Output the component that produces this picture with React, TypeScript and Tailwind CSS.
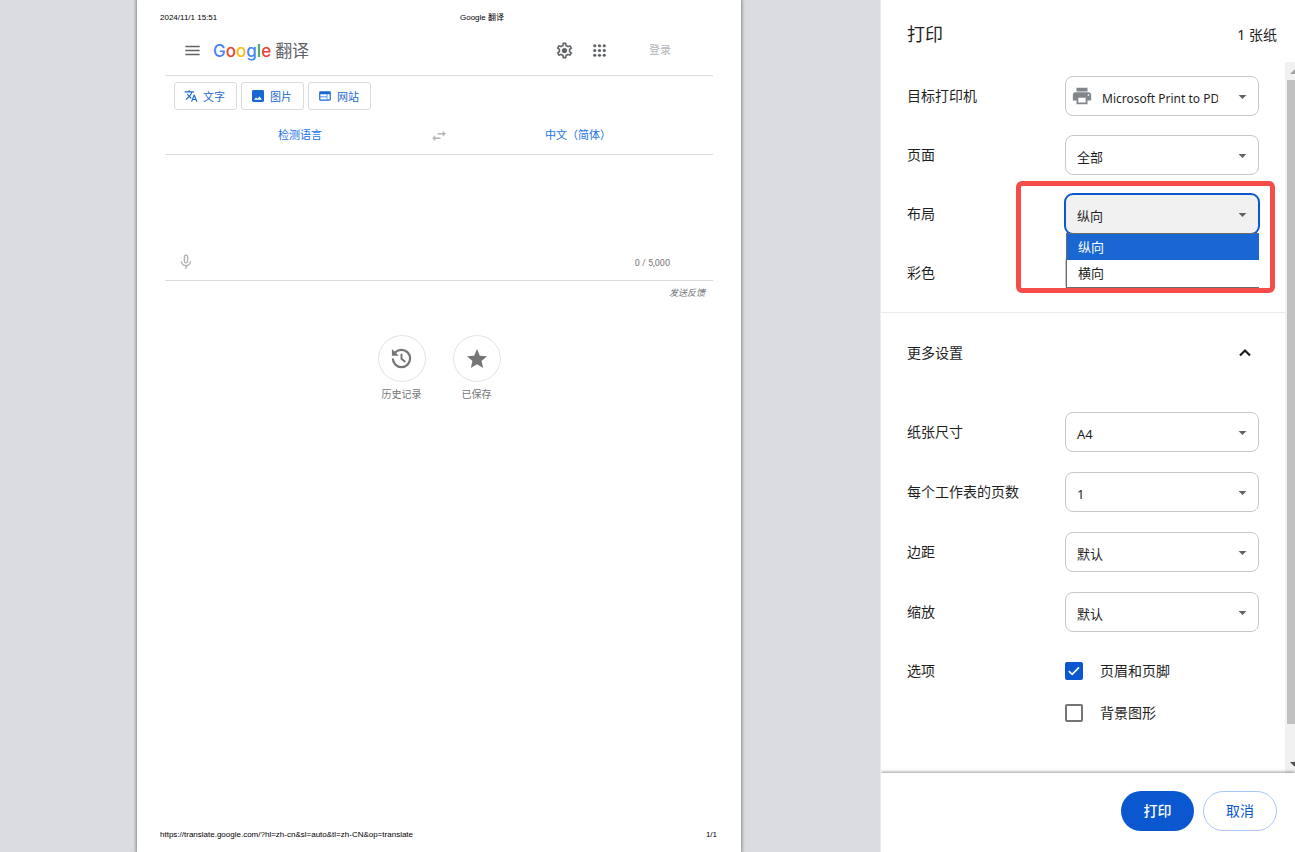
import { useState } from "react";
import type { ReactNode } from "react";
import { ChevronUp } from "lucide-react";
import {
  MdArrowDropDown,
  MdMenu,
  MdMicNone,
  MdOutlineSettings,
  MdPrint,
  MdStar,
  MdSwapHoriz,
  MdTranslate,
  MdWeb,
} from "react-icons/md";

function GearIcon() {
  return (
    <svg viewBox="0 0 24 24" className="size-[19px]" fill="currentColor">
      <MdOutlineSettings size={24} />
      <circle cx="12" cy="12" r="4.4" fill="#fff" />
      <circle cx="12" cy="12" r="3.3" />
    </svg>
  );
}

function AppsIcon() {
  const steps = [6, 12, 18];
  return (
    <svg viewBox="0 0 24 24" className="size-[19px]" fill="currentColor">
      {steps.map((y) => steps.map((x) => <circle key={`${x}-${y}`} cx={x} cy={y} r="2" />))}
    </svg>
  );
}

function ImageIcon() {
  return (
    <svg viewBox="0 0 14 14" className="size-3.5">
      <rect x="1" y="1" width="12" height="12" rx="1.4" fill="currentColor" />
      <path d="M3 10.8 5 8.4l1.4 1.4L8.6 7.4l2.4 3.4z" fill="#fff" />
    </svg>
  );
}

function HistoryIcon() {
  return (
    <svg viewBox="0 0 24 24" className="size-[23px]" fill="none" stroke="currentColor" strokeWidth="2.3">
      <path d="M3 12a9 9 0 1 0 9-9 9.75 9.75 0 0 0-6.74 2.74L4 7" />
      <path d="M12 7v5.3l4 3.4" strokeWidth="2" />
      <path d="M2 2v7.2h7.2l-2.4-2.3L4.4 4.4z" fill="currentColor" stroke="none" />
    </svg>
  );
}

function ModeButton({ icon, label }: { icon: ReactNode; label: string }) {
  return (
    <button
      type="button"
      className="flex h-7 w-[63px] items-center justify-center gap-[5px] rounded-[3px] border border-[#dadce0] pr-0.5 text-[11px] text-[#1967d2]"
    >
      {icon}
      <span className="pt-0.5">{label}</span>
    </button>
  );
}

function RoundAction({ icon, label }: { icon: ReactNode; label: string }) {
  return (
    <button type="button" className="flex w-12 flex-col items-center gap-1 text-[10px] leading-4 whitespace-nowrap text-[#757575]">
      <span className="flex h-[47px] w-12 items-center justify-center rounded-[50%] border border-[#e4e4e4]">{icon}</span>
      {label}
    </button>
  );
}

function Preview() {
  return (
    <main className="flex min-w-0 flex-1 justify-center overflow-hidden bg-[#dadce0] pr-0.5">
      <article className="flex w-[604px] flex-col bg-white pt-3 pb-[11px] shadow-[0_0_3px_1px_rgba(60,64,67,0.55)]">
        <header className="grid grid-cols-[300px_1fr] px-[23px] font-['Liberation_Sans','Noto_Sans_CJK_SC',sans-serif] text-[8px] leading-[12px] text-black">
          <span>2024/11/1 15:51</span>
          <span>Google 翻译</span>
        </header>

        <section className="mx-7 flex flex-col">
          <div className="flex h-[52px] items-center border-b border-[#dadce0] pt-0.5 pr-[42px] pl-[18px]">
            <button type="button" aria-label="菜单" className="text-[#5f6368]">
              <MdMenu size={19} />
            </button>
            <h1 className="ml-[11px] flex items-center gap-1 text-[#5f6368]">
              <span className="font-['Inter',sans-serif] text-[17px] leading-6 font-medium">
                <span className="text-[#4285f4]">G</span>
                <span className="text-[#ea4335]">o</span>
                <span className="text-[#fbbc04]">o</span>
                <span className="text-[#4285f4]">g</span>
                <span className="text-[#34a853]">l</span>
                <span className="text-[#ea4335]">e</span>
              </span>
              <span className="text-[17px] leading-6">翻译</span>
            </h1>
            <div className="ml-auto flex items-center gap-4 text-[#5f6368]">
              <button type="button" aria-label="设置">
                <GearIcon />
              </button>
              <button type="button" aria-label="应用">
                <AppsIcon />
              </button>
              <button type="button" className="ml-6 text-[11px] text-[#b3b5b8]">
                登录
              </button>
            </div>
          </div>

          <div className="flex gap-1 px-[9px] pt-1.5">
            <ModeButton icon={<MdTranslate size={14} />} label="文字" />
            <ModeButton icon={<ImageIcon />} label="图片" />
            <ModeButton icon={<MdWeb size={14} />} label="网站" />
          </div>

          <div className="grid h-[45px] grid-cols-[270px_8px_270px] items-center justify-center border-b border-[#dadce0] text-[11px] text-[#1a73e8]">
            <button type="button" className="pt-1.5">
              检测语言
            </button>
            <button type="button" aria-label="交换语言" className="flex justify-center pt-2 text-[#b3b5b8]">
              <MdSwapHoriz size={18} className="shrink-0" />
            </button>
            <button type="button" className="pt-1.5">
              中文（简体）
            </button>
          </div>

          <div className="flex h-[126px] items-end justify-between border-b border-[#dadce0] pr-[43px] pb-[9px] pl-3">
            <button type="button" aria-label="语音输入" className="text-[#b0b0b0]">
              <MdMicNone size={18} />
            </button>
            <span className="font-['Roboto',sans-serif] text-[9px] leading-4 text-[#757575]">0 / 5,000</span>
          </div>
          <a href="#feedback" className="mt-1 mr-2 self-end text-[9px] leading-4 text-[#70757a] italic">
            发送反馈
          </a>

          <div className="mt-[34px] flex justify-center gap-[27px]">
            <RoundAction icon={<HistoryIcon />} label="历史记录" />
            <RoundAction icon={<MdStar size={24} />} label="已保存" />
          </div>
        </section>

        <footer className="mt-auto flex justify-between pr-6 pl-[23px] font-['Liberation_Sans',sans-serif] text-[8px] leading-[12px] text-black">
          <span>https://translate.google.com/?hl=zh-cn&amp;sl=auto&amp;tl=zh-CN&amp;op=translate</span>
          <span>1/1</span>
        </footer>
      </article>
    </main>
  );
}

function Select({
  id,
  label,
  options,
  printer = false,
  active = false,
  children,
}: {
  id: string;
  label: string;
  options: string[];
  printer?: boolean;
  active?: boolean;
  children?: ReactNode;
}) {
  return (
    <div className="flex h-10 items-center justify-between">
      <label htmlFor={id} className="pb-0.5">
        {label}
      </label>
      <div className="relative h-10 w-[194px]">
        <select
          id={id}
          className={
            "size-full appearance-none rounded-lg border pt-1.5 outline-none " +
            (printer ? "pr-10 pl-9 text-[12px] " : "pr-9 pl-[11px] text-[13px] ") +
            (active ? "border-[#0b57d0] bg-[#f1f1f1] ring-1 ring-[#0b57d0]" : "border-[#c7c7c7] bg-white")
          }
        >
          {options.map((option) => (
            <option key={option}>{option}</option>
          ))}
        </select>
        {printer && <MdPrint size={22} className="pointer-events-none absolute top-[9px] left-1.5 text-[#80868b]" />}
        <MdArrowDropDown size={19} className="pointer-events-none absolute top-[11px] right-[7px] text-[#5f6368]" />
        {children}
      </div>
    </div>
  );
}

function Option({ label, checked, onChange }: { label: string; checked: boolean; onChange: () => void }) {
  return (
    <label className="flex h-[38px] items-center gap-[17px]">
      <span className="relative flex size-[18px]">
        <input
          type="checkbox"
          checked={checked}
          onChange={onChange}
          className="size-[18px] appearance-none rounded-xs border-2 border-[#757575] bg-white checked:border-[#0b57d0] checked:bg-[#0b57d0]"
        />
        {checked && (
          <svg viewBox="0 0 18 18" className="pointer-events-none absolute inset-0 size-[18px]" fill="none" stroke="#fff" strokeWidth="1.6">
            <path d="M3.8 9.2 7.2 12.4 14 5.4" />
          </svg>
        )}
      </span>
      <span className="pb-0.5">{label}</span>
    </label>
  );
}

function Settings() {
  const [headers, setHeaders] = useState(true);
  const [background, setBackground] = useState(false);

  return (
    <aside className="flex w-[415px] shrink-0 flex-col overflow-hidden border-l border-[#e8eaed] bg-white text-[14px] text-[#1f1f1f]">
      <header className="flex h-[62px] shrink-0 items-center justify-between pt-[7px] pr-[18px] pl-[26px]">
        <h2 className="text-[18px]">打印</h2>
        <span>1 张纸</span>
      </header>

      <div className="flex min-h-0 flex-1">
        <form className="min-w-0 flex-1 overflow-hidden">
          <div className="flex flex-col gap-[19px] border-b border-[#e8eaed] px-[26px] pt-3.5 pb-[19px]">
            <Select id="printer" label="目标打印机" options={["Microsoft Print to PDF"]} printer />
            <Select id="pages" label="页面" options={["全部", "自定义"]} />
            <Select id="layout" label="布局" options={["纵向", "横向"]} active>
              <ul
                role="listbox"
                aria-label="布局"
                className="absolute top-[39px] right-0 left-px z-10 border border-r-0 border-[#6b6b6b] bg-white text-[13px] leading-[26px]"
              >
                <li role="option" aria-selected="true" className="bg-[#1967d2] pl-[11px] text-white">
                  纵向
                </li>
                <li role="option" aria-selected="false" className="pb-px pl-[11px]">
                  横向
                </li>
              </ul>
              <div className="pointer-events-none absolute -top-[13px] -right-4 -left-[49px] z-20 h-28 rounded-md border-[5px] border-[#f64d4b]" />
            </Select>
            <Select id="color" label="彩色" options={["彩色", "黑白"]} />
          </div>

          <button type="button" aria-expanded="true" className="flex h-20 w-full items-center justify-between px-[26px]">
            <span className="pb-0.5">更多设置</span>
            <ChevronUp size={20} strokeWidth={2.6} strokeLinecap="butt" strokeLinejoin="miter" className="mr-1" />
          </button>

          <div className="flex flex-col gap-5 px-[26px] pt-[19px]">
            <Select id="paper" label="纸张尺寸" options={["A4", "A3"]} />
            <Select id="per-sheet" label="每个工作表的页数" options={["1", "2", "4"]} />
            <Select id="margins" label="边距" options={["默认", "无"]} />
            <Select id="scale" label="缩放" options={["默认", "自定义"]} />
            <fieldset className="flex justify-between">
              <span className="leading-[38px]">选项</span>
              <div className="flex w-[194px] flex-col gap-1">
                <Option label="页眉和页脚" checked={headers} onChange={() => setHeaders(!headers)} />
                <Option label="背景图形" checked={background} onChange={() => setBackground(!background)} />
              </div>
            </fieldset>
          </div>
        </form>

        <div aria-hidden="true" className="flex w-2.5 shrink-0 flex-col overflow-hidden bg-[#f1f1f1] pl-0.5">
          <svg viewBox="0 0 8 18" className="h-[18px] w-2 shrink-0" fill="#a3a3a3">
            <path d="M3 12 7.5 7.5 12 12z" />
          </svg>
          <div className="grow-[643] bg-[#c1c1c1]" />
          <div className="grow-[31]" />
          <svg viewBox="0 0 8 18" className="h-[18px] w-2 shrink-0" fill="#505050">
            <path d="M3 7 7.5 11.5 12 7z" />
          </svg>
        </div>
      </div>

      <footer className="z-10 flex shrink-0 justify-end gap-[9px] bg-white pt-[18px] pr-[18px] pb-[21px] shadow-[0_-1px_3px_rgba(0,0,0,0.4)]">
        <button type="button" className="h-10 w-[73px] rounded-full bg-[#0b57d0] pb-0.5 font-medium text-white">
          打印
        </button>
        <button type="button" className="h-10 w-[74px] rounded-full border border-[#a8c7fa] pb-0.5 text-[#0b57d0]">
          取消
        </button>
      </footer>
    </aside>
  );
}

export default function App() {
  return (
    <div className="flex h-screen overflow-hidden font-['Noto_Sans','Noto_Sans_CJK_SC',sans-serif]">
      <Preview />
      <Settings />
    </div>
  );
}
